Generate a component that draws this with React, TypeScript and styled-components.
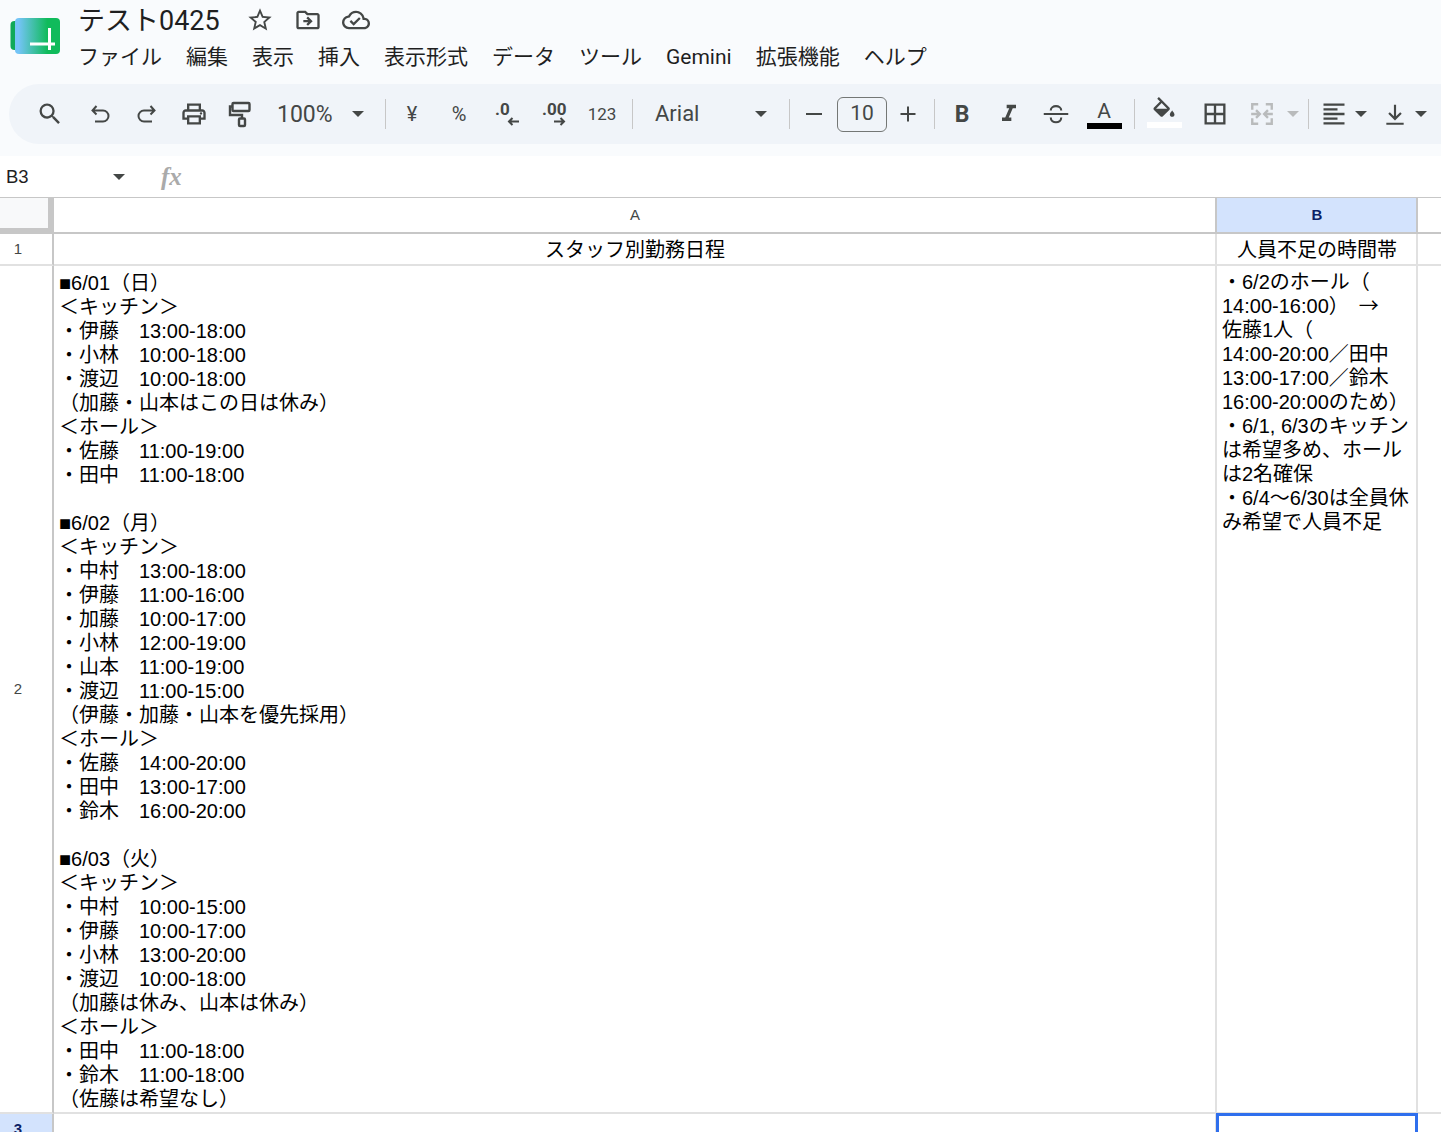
import styled, {createGlobalStyle} from "styled-components";
import type {ReactNode} from "react";
import {
    MdBorderAll,
    MdFormatAlignLeft,
    MdFormatItalic,
    MdOutlineCloudDone,
    MdOutlineDriveFileMove,
    MdOutlineLocalPrintshop,
    MdSearch,
    MdStarBorder,
} from "react-icons/md";

const CJK = `"Liberation Sans", "Noto Sans CJK JP", sans-serif`;
const UI = `Roboto, "Noto Sans CJK JP", sans-serif`;

const MENU = ["ファイル", "編集", "表示", "挿入", "表示形式", "データ", "ツール", "Gemini", "拡張機能", "ヘルプ"];

const SCHEDULE = [
    "■6/01（日）",
    "＜キッチン＞",
    "・伊藤　13:00-18:00",
    "・小林　10:00-18:00",
    "・渡辺　10:00-18:00",
    "（加藤・山本はこの日は休み）",
    "＜ホール＞",
    "・佐藤　11:00-19:00",
    "・田中　11:00-18:00",
    "",
    "■6/02（月）",
    "＜キッチン＞",
    "・中村　13:00-18:00",
    "・伊藤　11:00-16:00",
    "・加藤　10:00-17:00",
    "・小林　12:00-19:00",
    "・山本　11:00-19:00",
    "・渡辺　11:00-15:00",
    "（伊藤・加藤・山本を優先採用）",
    "＜ホール＞",
    "・佐藤　14:00-20:00",
    "・田中　13:00-17:00",
    "・鈴木　16:00-20:00",
    "",
    "■6/03（火）",
    "＜キッチン＞",
    "・中村　10:00-15:00",
    "・伊藤　10:00-17:00",
    "・小林　13:00-20:00",
    "・渡辺　10:00-18:00",
    "（加藤は休み、山本は休み）",
    "＜ホール＞",
    "・田中　11:00-18:00",
    "・鈴木　11:00-18:00",
    "（佐藤は希望なし）",
].join("\n");

const SHORTAGE_HEAD = "・6/2のホール（\n14:00-16:00）　";
const SHORTAGE_TAIL = [
    "",
    "佐藤1人（",
    "14:00-20:00／田中",
    "13:00-17:00／鈴木",
    "16:00-20:00のため）",
    "・6/1, 6/3のキッチン",
    "は希望多め、ホール",
    "は2名確保",
    "・6/4～6/30は全員休",
    "み希望で人員不足",
].join("\n");

function Logo() {
    return (
        <svg width="50" height="36" viewBox="0 0 50 36">
            <defs>
                <linearGradient id="logoFill" x1="0" x2="1" y1="0" y2="0">
                    <stop offset="0.08" stopColor="#74c4f6"/>
                    <stop offset="0.72" stopColor="#10bb5b"/>
                </linearGradient>
            </defs>
            <rect x="0.500" y="3" width="12" height="29" rx="4" fill="#0fa958"/>
            <rect x="5" y="0" width="45" height="36" rx="4" fill="url(#logoFill)"/>
            <path d="M20 26H45M39.500 10V32" stroke="#fff" strokeWidth="3" fill="none"/>
        </svg>
    );
}

// line icons drawn by hand where the packages have no matching stroke
function Line({size = 24, w = 2, color = "#444746", children}: {
    size?: number, w?: number, color?: string, children: ReactNode,
}) {
    return (
        <svg width={size} height={size} viewBox="0 0 24 24" fill="none" stroke={color} strokeWidth={w}>
            {children}
        </svg>
    );
}

function Merge() {
    return (
        <Line size={26} w={2.200} color="#b9bbbc">
            <path d="M8.500 3H3v5M15.500 3H21v5M3 16v5h5.500M21 16v5h-5.500"/>
            <path d="M2 12h7.500M6.500 8.500 10 12l-3.500 3.500M22 12h-7.500M17.500 8.500 14 12l3.500 3.500"/>
        </Line>
    );
}

function PaintRoller() {
    return (
        <svg width="24" height="28" viewBox="0 0 24 28" fill="none" stroke="#444746" strokeWidth="2.400">
            <rect x="4.500" y="3" width="17" height="8" rx="1"/>
            <path d="M4 6.500H2V15h12v3.500"/>
            <rect x="11" y="18.500" width="6" height="7.500" rx="1"/>
        </svg>
    );
}

function FillBucket() {
    return (
        <svg width="28" height="21" viewBox="0 0 24 18" fill="#444746">
            <path
                d="M16.560 8.940 7.620 0 6.210 1.410l2.380 2.380-5.150 5.150c-.59.59-.59 1.540 0 2.120l5.500 5.500c.29.29.68.44 1.060.44s.77-.15 1.060-.44l5.500-5.500c.59-.58.59-1.530 0-2.120zM5.210 10 10 5.210 14.790 10H5.210zM19 11.500s-2 2.170-2 3.500c0 1.100.9 2 2 2s2-.9 2-2c0-1.330-2-3.500-2-3.500z"/>
        </svg>
    );
}

function Decimal({label, x, arrow}: { label: string, x: number, arrow: string }) {
    return (
        <svg width="30" height="30" viewBox="0 0 30 30">
            <text x={x} y="16" fontFamily="Roboto, sans-serif" fontWeight="700" fontSize="17"
                  fill="#444746">{label}</text>
            <path d={arrow} stroke="#444746" strokeWidth="2" fill="none"/>
        </svg>
    );
}

function Tool({w, pl, children}: { w: number, pl?: number, children: ReactNode }) {
    return <ToolButton $w={w} $pl={pl}>{children}</ToolButton>;
}

export default function App() {
    return (
        <>
            <GlobalStyle/>
            <Page>
                <Header>
                    <TopBar>
                        <LogoBox><Logo/></LogoBox>
                        <TitleBlock>
                            <TitleRow>
                                <Title>テスト0425</Title>
                                <TitleIcons>
                                    <MdStarBorder size={28}/>
                                    <MdOutlineDriveFileMove size={28}/>
                                    <MdOutlineCloudDone size={28}/>
                                </TitleIcons>
                            </TitleRow>
                            <MenuRow>
                                {MENU.map(item => <MenuItem key={item}>{item}</MenuItem>)}
                            </MenuRow>
                        </TitleBlock>
                    </TopBar>
                    <Toolbar>
                        <Tool w={50}><MdSearch size={28}/></Tool>
                        <Tool w={50}>
                            <Line>
                                <path d="M8.500 4 4.500 8.500l4 4M4.500 8.500H15a5.500 5.500 0 0 1 0 11H7"/>
                            </Line>
                        </Tool>
                        <Tool w={44}>
                            <Line>
                                <path d="M15.500 4l4 4.500-4 4M19.500 8.500H9a5.500 5.500 0 0 0 0 11h8"/>
                            </Line>
                        </Tool>
                        <Tool w={50}><MdOutlineLocalPrintshop size={28}/></Tool>
                        <Tool w={42}><PaintRoller/></Tool>
                        <ZoomLabel>100%</ZoomLabel>
                        <Caret/>
                        <Sep $left={21}/>
                        <Tool w={52}><SmallGlyph>¥</SmallGlyph></Tool>
                        <Tool w={42}><SmallGlyph>%</SmallGlyph></Tool>
                        <Tool w={52}>
                            <Decimal label=".0" x={4} arrow="M28 22.500H18M21.500 19 18 22.500l3.500 3.500"/>
                        </Tool>
                        <Tool w={44}>
                            <Decimal label=".00" x={3} arrow="M15 22.500h10M21.500 19l3.500 3.500-3.500 3.500"/>
                        </Tool>
                        <Tool w={52}><NumberGlyph>123</NumberGlyph></Tool>
                        <Sep $left={4}/>
                        <FontName>Arial</FontName>
                        <Caret/>
                        <Sep $left={22}/>
                        <Tool w={47}><Line size={24} w={2}><path d="M4 12h16"/></Line></Tool>
                        <SizeBox>10</SizeBox>
                        <Tool w={42}><Line size={24} w={2}><path d="M4.500 12h15M12 4.500v15"/></Line></Tool>
                        <Sep $left={5}/>
                        <Tool w={54}><BoldGlyph>B</BoldGlyph></Tool>
                        <Tool w={40}><MdFormatItalic size={28}/></Tool>
                        <Tool w={54}>
                            <Line size={28} w={1.800}>
                                <path d="M1.500 12h21M7.500 9c0-5 9-5 9 0M7.500 15c0 5.500 9 5.500 9 0"/>
                            </Line>
                        </Tool>
                        <Tool w={42}>
                            <Swatched>
                                <TextColorGlyph>A</TextColorGlyph>
                                <ColorBar $color="#000"/>
                            </Swatched>
                        </Tool>
                        <Sep $left={9}/>
                        <Tool w={58}>
                            <Swatched $lift={3}>
                                <FillBucket/>
                                <ColorBar $color="#fff" $gap={4}/>
                            </Swatched>
                        </Tool>
                        <Tool w={44}><MdBorderAll size={28}/></Tool>
                        <Tool w={50}><Merge/></Tool>
                        <Caret $muted/>
                        <Sep $left={9}/>
                        <Tool w={46} pl={4}><MdFormatAlignLeft size={28}/></Tool>
                        <Caret/>
                        <Tool w={48} pl={8}>
                            <Line size={26} w={2}>
                                <path d="M12 3.500v13M6.500 11l5.500 5.500 5.500-5.500M4 21h16"/>
                            </Line>
                        </Tool>
                        <Caret/>
                    </Toolbar>
                </Header>
                <FormulaBar>
                    <NameBox>
                        B3
                        <Caret/>
                    </NameBox>
                    <Fx>fx</Fx>
                </FormulaBar>
                <Sheet>
                    <Corner/>
                    <ColumnHead>A</ColumnHead>
                    <ColumnHead $active>B</ColumnHead>
                    <Blank $head/>

                    <RowHead>1</RowHead>
                    <TitleCell>スタッフ別勤務日程</TitleCell>
                    <TitleCell>人員不足の時間帯</TitleCell>
                    <Blank/>

                    <RowHead>2</RowHead>
                    <TextCell $top={5}>{SCHEDULE}</TextCell>
                    <TextCell $top={4}>
                        {SHORTAGE_HEAD}<ArrowGlyph>→</ArrowGlyph>{SHORTAGE_TAIL}
                    </TextCell>
                    <Blank/>

                    <RowHead $active>3</RowHead>
                    <Cell/>
                    <SelectedCell/>
                    <Blank/>
                </Sheet>
            </Page>
        </>
    );
}

/* CSS */

const GlobalStyle = createGlobalStyle`
  html, body {
    margin: 0;
    height: 1132px;
    overflow: hidden;
    background: #fff;
  }
`;

const Page = styled.div`
  width: 1441px;
  height: 1132px;
  overflow: hidden;
  display: flex;
  flex-direction: column;
  font-family: ${UI};
  color: #1f1f1f;
`;

const Header = styled.header`
  height: 156px;
  flex-shrink: 0;
  background: #f9fbfd;
`;

const TopBar = styled.div`
  height: 84px;
  display: flex;
`;

const LogoBox = styled.div`
  width: 50px;
  margin: 18px 18px 0 10px;
`;

const TitleBlock = styled.div`
  display: flex;
  flex-direction: column;
`;

const TitleRow = styled.div`
  height: 40px;
  display: flex;
  align-items: center;
`;

const Title = styled.div`
  font-size: 27px;
  width: 168px;
  margin-bottom: 3px;
  color: #1f1f1f;
`;

const TitleIcons = styled.div`
  display: flex;
  align-items: center;
  gap: 20px;
  color: #444746;
`;

const MenuRow = styled.nav`
  height: 32px;
  display: flex;
  gap: 24px;
`;

const MenuItem = styled.span`
  font-size: 21px;
  line-height: 35px;
  color: #1f1f1f;
`;

const Toolbar = styled.div`
  height: 60px;
  margin-left: 9px;
  padding-left: 16px;
  display: flex;
  align-items: center;
  background: #f0f4f9;
  border-radius: 30px 0 0 30px;
  color: #444746;
`;

const ToolButton = styled.div<{ $w: number, $pl?: number }>`
  box-sizing: border-box;
  width: ${p => p.$w}px;
  height: 40px;
  padding-left: ${p => p.$pl ?? 0}px;
  flex-shrink: 0;
  display: flex;
  align-items: center;
  justify-content: center;
`;

const Sep = styled.div<{ $left: number }>`
  width: 1px;
  height: 30px;
  margin-left: ${p => p.$left}px;
  flex-shrink: 0;
  background: #c7c7c7;
`;

const Caret = styled.span<{ $muted?: boolean }>`
  flex-shrink: 0;
  width: 0;
  height: 0;
  border-left: 6px solid transparent;
  border-right: 6px solid transparent;
  border-top: 6px solid ${p => p.$muted ? "#b9bbbc" : "#444746"};
`;

const ZoomLabel = styled.span`
  font-size: 23px;
  width: 75px;
  margin-left: 16px;
`;

const SmallGlyph = styled.span`
  font-size: 20px;
`;

const NumberGlyph = styled.span`
  font-size: 17px;
`;

const BoldGlyph = styled.span`
  font: 700 23px Roboto, sans-serif;
`;

const FontName = styled.span`
  font-size: 22px;
  width: 100px;
  margin: 0 0 2px 22px;
`;

const SizeBox = styled.div`
  box-sizing: border-box;
  width: 50px;
  height: 35px;
  padding-bottom: 2px;
  display: flex;
  align-items: center;
  justify-content: center;
  font-size: 21px;
  border: 1px solid #747775;
  border-radius: 6px;
`;

const Swatched = styled.div<{ $lift?: number }>`
  display: flex;
  flex-direction: column;
  align-items: center;
  width: 35px;
  margin-bottom: ${p => p.$lift ?? 0}px;
`;

const TextColorGlyph = styled.span`
  font-size: 21px;
  line-height: 23px;
`;

const ColorBar = styled.span<{ $color: string, $gap?: number }>`
  display: block;
  width: 35px;
  height: 6px;
  margin-top: ${p => p.$gap ?? 0}px;
  background: ${p => p.$color};
`;

const FormulaBar = styled.div`
  height: 41px;
  flex-shrink: 0;
  display: flex;
  align-items: center;
  background: #fff;
  border-bottom: 1px solid #c7c7c7;
`;

const NameBox = styled.div`
  width: 125px;
  padding-left: 6px;
  box-sizing: border-box;
  display: flex;
  align-items: center;
  justify-content: space-between;
  font: 18.500px "Liberation Sans", sans-serif;
  color: #1f1f1f;
`;

const Fx = styled.span`
  margin-left: 36px;
  font: italic bold 25px "Liberation Serif", serif;
  color: #aaa;
`;

const Sheet = styled.div`
  flex: 1;
  display: grid;
  grid-template-columns: 54px 1163px 201px 23px;
  grid-template-rows: 36px 32px 848px 32px;
  font-family: ${CJK};
  color: #000;
`;

const Corner = styled.div`
  box-sizing: border-box;
  background: #f8f9fa;
  border-right: 6px solid #c7c7c7;
  border-bottom: 6px solid #c7c7c7;
`;

const ColumnHead = styled.div<{ $active?: boolean }>`
  box-sizing: border-box;
  display: flex;
  align-items: center;
  justify-content: center;
  font-size: 15px;
  font-weight: ${p => p.$active ? 700 : 400};
  color: ${p => p.$active ? "#0b1f66" : "#444746"};
  background: ${p => p.$active ? "#d3e3fd" : "#fff"};
  border-right: 2px solid #c7c7c7;
  border-bottom: 2px solid #c7c7c7;
  padding: 0 0 1px 1px;
`;

const RowHead = styled.div<{ $active?: boolean }>`
  box-sizing: border-box;
  display: flex;
  align-items: center;
  justify-content: center;
  padding: 0 16px 1px 0;
  font-size: 15px;
  font-weight: ${p => p.$active ? 700 : 400};
  color: ${p => p.$active ? "#0b1f66" : "#444746"};
  background: ${p => p.$active ? "#d3e3fd" : "#fff"};
  border-right: 2px solid #c7c7c7;
  border-bottom: 2px solid #e1e1e1;
`;

const Cell = styled.div`
  box-sizing: border-box;
  border-right: 2px solid #e1e1e1;
  border-bottom: 2px solid #e1e1e1;
`;

const Blank = styled.div<{ $head?: boolean }>`
  box-sizing: border-box;
  border-bottom: 2px solid ${p => p.$head ? "#c7c7c7" : "#e1e1e1"};
`;

const TitleCell = styled(Cell)`
  display: flex;
  align-items: center;
  justify-content: center;
  padding: 2px 0 0 1px;
  font-size: 20px;
  line-height: 24px;
`;

const TextCell = styled(Cell)<{ $top: number }>`
  padding: ${p => p.$top}px 0 0 5px;
  font-size: 20px;
  line-height: 24px;
  white-space: pre;
`;

const ArrowGlyph = styled.span`
  font-family: "Noto Sans CJK JP", sans-serif;
  line-height: 20px;
`;

const SelectedCell = styled.div`
  box-sizing: border-box;
  margin: -1px 0 0 -1px;
  border: 3px solid #2f6fed;
`;

/* CSS */
